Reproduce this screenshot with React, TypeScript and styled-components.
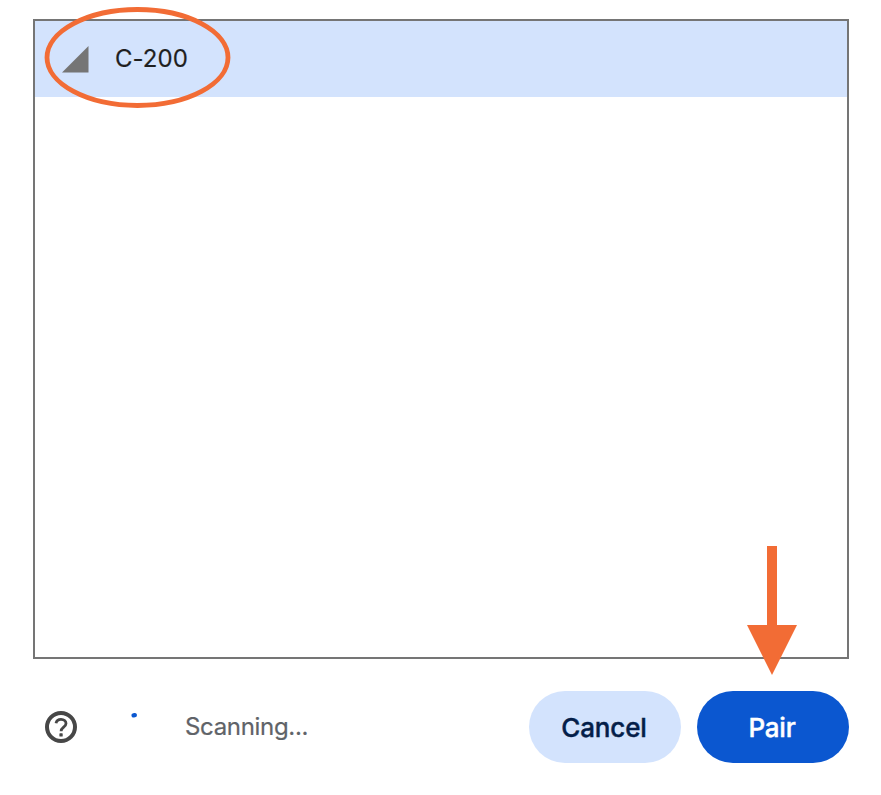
import React from "react";
import styled, { createGlobalStyle } from "styled-components";

const GlobalStyle = createGlobalStyle`
  * { box-sizing: border-box; }
  body { margin: 0; background: #fff; overflow: hidden; }
`;

const Dialog = styled.main`
  position: relative;
  display: flex;
  flex-direction: column;
  width: 881px;
  height: 795px;
  padding: 19px 32px 32px 33px;
  background: #fff;
  font-family: Inter, "Liberation Sans", sans-serif;
`;

const DeviceList = styled.section`
  height: 640px;
  border: 2px solid #757575;
`;

const DeviceRow = styled.div`
  display: flex;
  align-items: center;
  height: 76px;
  padding-left: 27px;
  background: #d3e3fd;
`;

const SignalIcon = styled.svg`
  width: 27px;
  height: 27px;
  margin-right: 26px;
`;

const DeviceName = styled.span`
  color: #1f1f1f;
  font-size: 24px;
  line-height: 30px;
  letter-spacing: 0.05px;
  -webkit-text-stroke: 0.2px #1f1f1f;
`;

const Footer = styled.footer`
  display: flex;
  align-items: center;
  height: 72px;
  margin-top: 32px;
  padding-left: 12px;
`;

const HelpIcon = styled.svg`
  width: 32px;
  height: 32px;
`;

const Spinner = styled.svg`
  width: 32px;
  height: 32px;
  margin-left: 41px;
`;

const Status = styled.span`
  flex: 1;
  margin-left: 35px;
  color: #5f6368;
  font-size: 24px;
  line-height: 30px;
  letter-spacing: -0.32px;
  -webkit-text-stroke: 0.2px #5f6368;
`;

const Actions = styled.div`
  display: flex;
  gap: 16px;
`;

const PillButton = styled.button<{ $primary?: boolean }>`
  width: 152px;
  height: 72px;
  padding: 2px 2px 0 0;
  border: 0;
  border-radius: 36px;
  background: ${(p) => (p.$primary ? "#0b57d0" : "#d3e3fd")};
  color: ${(p) => (p.$primary ? "#fff" : "#041e49")};
  font: 500 26px/32px Inter, "Liberation Sans", sans-serif;
  letter-spacing: ${(p) => (p.$primary ? "-0.2px" : "-0.15px")};
  -webkit-text-stroke: 0.4px currentColor;
`;

const HighlightRing = styled.svg`
  position: absolute;
  left: 44px;
  top: 6px;
  width: 187px;
  height: 103px;
`;

const PointerArrow = styled.svg`
  position: absolute;
  left: 747px;
  top: 546px;
  width: 50px;
  height: 129px;
`;

export default function App() {
  return (
    <>
      <GlobalStyle />
      <Dialog>
        <DeviceList>
          <DeviceRow>
            <SignalIcon viewBox="0 0 27 27">
              <path d="M0 26.5 26.5 0v26.5z" fill="#757575" />
            </SignalIcon>
            <DeviceName>C-200</DeviceName>
          </DeviceRow>
        </DeviceList>
        <Footer>
          <HelpIcon viewBox="0 0 32 32">
            <circle cx="16" cy="16" r="14" fill="none" stroke="#474747" strokeWidth="4" />
            <path
              d="M11 12.2c.5-2.4 2.4-3.9 5-3.9 3 0 5 1.8 5 4.2 0 3.6-4.9 3.7-4.9 7.7"
              fill="none"
              stroke="#474747"
              strokeWidth="2.8"
            />
            <rect x="14.4" y="22.3" width="3.3" height="3.3" rx="0.6" fill="#474747" />
          </HelpIcon>
          <Spinner viewBox="0 0 32 32">
            <path d="M15.6 4.4 16.8 4.2" fill="none" stroke="#0b57d0" strokeWidth="4.4" strokeLinecap="round" />
          </Spinner>
          <Status>Scanning...</Status>
          <Actions>
            <PillButton>Cancel</PillButton>
            <PillButton $primary>Pair</PillButton>
          </Actions>
        </Footer>
        <HighlightRing viewBox="0 0 187 103">
          <ellipse cx="93.5" cy="51.5" rx="90.5" ry="48" fill="none" stroke="#f26c35" strokeWidth="4.8" />
        </HighlightRing>
        <PointerArrow viewBox="0 0 50 129">
          <path d="M20 0h10v79h20L25 129 0 79h20z" fill="#f26c35" />
        </PointerArrow>
      </Dialog>
    </>
  );
}
